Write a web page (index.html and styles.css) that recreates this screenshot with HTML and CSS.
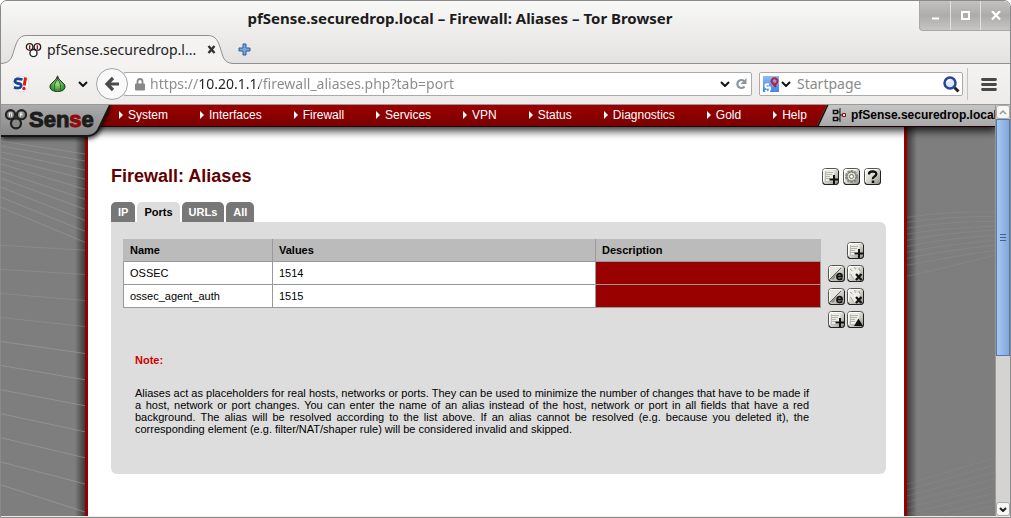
FILE: index.html
```html
<!DOCTYPE html>
<html lang="en">
<head>
<meta charset="utf-8">
<meta name="viewport" content="width=device-width, initial-scale=1">
<title>pfSense.securedrop.local – Firewall: Aliases</title>
<link rel="stylesheet" href="styles.css">
</head>
<body>
<svg class="defs" aria-hidden="true">
  <defs>
    <linearGradient id="btn" x1="0" y1="0" x2="1" y2="1"><stop offset="0" stop-color="#fff"/><stop offset=".5" stop-color="#d8d8d0"/><stop offset="1" stop-color="#8c8c84"/></linearGradient>
    <linearGradient id="metal" x1="0" y1="0" x2="0" y2="1"><stop offset="0" stop-color="#ababab"/><stop offset="1" stop-color="#858585"/></linearGradient>
    <linearGradient id="sp" x1="0" y1="0" x2="0" y2="1"><stop offset="0" stop-color="#8bbcf5"/><stop offset="1" stop-color="#3d86e8"/></linearGradient>
    <radialGradient id="onion"><stop offset="0" stop-color="#a5e07c"/><stop offset="1" stop-color="#2f8a34"/></radialGradient>
    <symbol id="base" viewBox="0 0 17 17"><rect x=".5" y=".5" width="16" height="16" rx="3" fill="url(#btn)" stroke="#55554f"/><path d="M1 14.500q0 2 2 2h11q2.500 0 2.500-2.500V3" fill="none" stroke="#222"/><path d="M1.500 13V3q0-1.500 1.500-1.500h10" fill="none" stroke="#fff"/></symbol>
    <symbol id="page" viewBox="0 0 17 17"><path d="M4 3h8v10H4z" fill="#eeeee6"/><path d="M4 4.500h7M4 6.500h6M4 8.500h4M4 10.500h4" stroke="#b4b4ac"/><path d="M3.500 3v10.500h5" fill="none" stroke="#bbb"/></symbol>
    <symbol id="add" viewBox="0 0 17 17"><use href="#base"/><use href="#page"/><path d="M12 7v9M7.500 11.500h9" stroke="#111" stroke-width="2"/></symbol>
    <symbol id="up" viewBox="0 0 17 17"><use href="#base"/><use href="#page"/><path d="M11.500 7.500 16 15H7z" fill="#111"/></symbol>
    <symbol id="edit" viewBox="0 0 17 17"><use href="#base"/><path d="M2 13 13 2H2z" fill="#e6e6de"/><path d="M2 14.500 14 3l-5 5-3 6.500z" fill="#8f8f87"/><path d="M2 14 13 3" stroke="#66665f"/><path d="M9 11.500h5q0-2.800-2.400-2.800T9 11.600t2.600 2.800q1.700 0 2.500-1.200" fill="none" stroke="#111" stroke-width="1.800"/></symbol>
    <symbol id="del" viewBox="0 0 17 17"><use href="#base"/><path d="m3 6 4-3 6 3-3 7-4 1z" fill="#efefe8"/><path d="m3 4 2.500 2M7.500 2l1 2.500M3.500 9l3 4.500M12 3l1 3" stroke="#a0a098"/><path d="m9 9 5.500 6m0-6L9 15" stroke="#111" stroke-width="2.200"/></symbol>
    <symbol id="gear" viewBox="0 0 17 17"><use href="#base"/><circle cx="8.500" cy="8.500" r="5.500" fill="#bcbcb4" stroke="#8a8a82" stroke-width="2" stroke-dasharray="2.500 1"/><circle cx="8.500" cy="8.500" r="4.500" fill="#ddddd5" stroke="#77776f"/><circle cx="8.500" cy="8.500" r="2" fill="#f8f8f0" stroke="#77776f"/></symbol>
    <symbol id="help" viewBox="0 0 17 17"><use href="#base"/><path d="M5 6.500V6q0-2.500 3.700-2.500T12.300 6q0 1.500-1.800 2.500T9 11" fill="none" stroke="#111" stroke-width="2.300"/><path d="M7.800 12.500h2.500v2.500H7.800z" fill="#111"/></symbol>
    <symbol id="rings" viewBox="0 0 22 20"><circle cx="6" cy="6" r="4.200"/><circle cx="16" cy="6" r="4.200"/><circle cx="11" cy="14" r="4.600"/></symbol>
    <symbol id="chev" viewBox="0 0 10 6"><path d="m1 1 4 4 4-4" fill="none" stroke="#111" stroke-width="2"/></symbol>
  </defs>
</svg>

<div class="window">
  <header class="chrome">
    <div class="titlebar">
      <span class="window-title">pfSense.securedrop.local – Firewall: Aliases – Tor Browser</span>
      <div class="controls">
        <button type="button" aria-label="Minimize"><svg width="9" height="9"><path d="M1 7.500h7" stroke="#fff" stroke-width="2"/></svg></button>
        <button type="button" aria-label="Maximize"><svg width="9" height="9"><path d="M1 1h7v7H1z" fill="none" stroke="#fff" stroke-width="2"/></svg></button>
        <button type="button" aria-label="Close"><svg width="10" height="9"><path d="m1 0 8 8.500M9 0 1 8.500" stroke="#fff" stroke-width="2.200"/></svg></button>
      </div>
    </div>
    <div class="tabstrip">
      <div class="browser-tab">
        <svg class="tab-shape" width="232" height="29" viewBox="0 0 232 29" aria-hidden="true"><path d="M0 29V28.500C11 28 11 21 14 12 17 3 20 .5 26 .5H206C213 .5 216 3 219 12 222 21 222 28 232 28.500V29z" fill="#f4f3f2"/><path d="M0 28.500C11 28 11 21 14 12 17 3 20 .5 26 .5H206C213 .5 216 3 219 12 222 21 222 28 232 28.500" fill="none" stroke="#8f8f8f"/></svg>
        <svg class="favicon" width="17" height="16" viewBox="0 0 22 20" fill="#fff" stroke="#222" stroke-width="1.800" aria-hidden="true"><use href="#rings"/><path d="M6 4v5M16 4v5" stroke="#b00"/></svg>
        <span class="tab-title">pfSense.securedrop.l...</span>
        <button type="button" class="tab-close" aria-label="Close tab"><svg width="9" height="9"><path d="m1.500 1 6 7m0-7-6 7" stroke="#333" stroke-width="2.400"/></svg></button>
      </div>
      <button type="button" class="new-tab" aria-label="New tab"><svg width="13" height="13"><path d="M5 1h3v4h4v3H8v4H5V8H1V5h4z" fill="#7ba6d9" stroke="#2d5c9e"/></svg></button>
    </div>
    <div class="toolbar">
      <button type="button" class="script-btn" aria-label="NoScript"><svg width="18" height="18" viewBox="0 0 18 18"><circle cx="9" cy="9" r="8" fill="#fff" stroke="#ddd"/><path d="M10.500 4.500Q3.500 2.500 3 6q0 2 3.500 2.500T9 11.500q-1 2.500-7 .8" fill="none" stroke="#16459b" stroke-width="2.800"/><path d="m13.500 2.500-1.200 8" stroke="#e01818" stroke-width="3"/><circle cx="12" cy="13.500" r="1.700" fill="#e01818"/></svg></button>
      <button type="button" class="onion-btn" aria-label="Tor"><svg width="17" height="18" viewBox="0 0 17 18"><path d="M8.500 1Q9 4 13 7t3 5.500q-1 4-7.500 4T1 12.500Q0 10 4 7t4.500-6z" fill="url(#onion)" stroke="#1c3d20"/><path d="M8.500 4Q4 9 6 16M8.500 4q4.500 5 2.500 12" fill="none" stroke="#2b6b2e"/><path d="m7 4 1.500-4L10 4z" fill="#553d4a"/></svg><svg width="10" height="6"><use href="#chev"/></svg></button>
      <button type="button" class="back" aria-label="Back"><svg width="16" height="16"><path d="M15 8H4M9 2 3 8l6 6" fill="none" stroke="#4a4a4a" stroke-width="3.200"/></svg></button>
      <div class="field url-field">
        <svg width="10" height="13" viewBox="0 0 10 13" aria-hidden="true"><path d="M2.500 6V3.500q0-2.500 2.500-2.500t2.500 2.500V6" fill="none" stroke="#888" stroke-width="1.800"/><rect y="5.500" width="10" height="7" rx="1" fill="#888"/></svg>
        <input class="url" type="text" aria-label="Address" value="https://10.20.1.1/firewall_aliases.php?tab=port">
        <svg width="10" height="6"><use href="#chev"/></svg>
        <button type="button" class="reload" aria-label="Reload"><svg width="12" height="12"><path d="M9.500 8.500a4 4 0 1 1-.500-5.500" fill="none" stroke="#8b959f" stroke-width="2.200"/><path d="M11.500 0v6h-6z" fill="#8b959f"/></svg></button>
      </div>
      <div class="field search-field">
        <svg width="16" height="16" viewBox="0 0 16 16" aria-hidden="true"><rect width="16" height="16" fill="url(#sp)"/><path d="M6 8.500Q2 7.500 2.500 10t3 1.500 1 3-4-.5" fill="none" stroke="#fff" stroke-width="2"/><path d="m8 5 5 6M8.500 5q1-3.500 4-2.500t1.500 4-3.500 1" fill="none" stroke="#c21d36" stroke-width="2"/></svg>
        <svg width="10" height="6"><use href="#chev"/></svg>
        <input class="search" type="text" aria-label="Search" placeholder="Startpage">
        <svg width="17" height="17" viewBox="0 0 17 17" aria-hidden="true"><path d="m11.500 11.500 4 4" stroke="#222" stroke-width="3"/><circle cx="7" cy="7" r="5.500" fill="#dce8fa" stroke="#28449a" stroke-width="2.500"/><path d="M4.500 6q.5-2 3-2" fill="none" stroke="#fff" stroke-width="1.500"/></svg>
      </div>
      <button type="button" class="menu-btn" aria-label="Menu"><svg width="16" height="13"><path d="M1.500 1.500h13M1.500 6.500h13M1.500 11.500h13" stroke="#484848" stroke-width="2.800" stroke-linecap="round"/></svg></button>
    </div>
  </header>

  <div class="viewport">
    <div class="site">
      <div class="masthead">
        <a class="logo" href="#" aria-label="pfSense">
          <svg class="logo-plate" width="114" height="40" aria-hidden="true"><path d="M0 0H109L97 25Q93 32 86 32H0z" fill="url(#metal)"/><path d="M109 0 97 25Q93 31 86 31H0" fill="none" stroke="#151515" stroke-width="2"/></svg>
          <svg class="logo-rings" width="24" height="22" viewBox="0 0 22 20" fill="#888" stroke="#222" stroke-width="2" aria-hidden="true"><use href="#rings"/><path d="M5 8V4.500h2V8M15 8V4.500h2M14.500 6h2.500" fill="none" stroke-width="1" stroke="#eee"/></svg>
          <span class="wordmark">Sen<span>s</span>e</span>
        </a>
        <nav class="menu">
          <a href="#">System</a><a href="#">Interfaces</a><a href="#">Firewall</a><a href="#">Services</a><a href="#">VPN</a><a href="#">Status</a><a href="#">Diagnostics</a><a href="#">Gold</a><a href="#">Help</a>
        </nav>
        <div class="host">
          <svg width="14" height="15" aria-hidden="true"><path d="M1.500 2.500h4v3h-4zM1.500 9.500h4v3h-4z" fill="#ddd" stroke="#111" stroke-width="1.600"/><path d="M5.500 4H8m-2.500 7H8M8 0v14M8 7h2" fill="none" stroke="#111"/><path d="M10.500 5.500h3v3h-3z" fill="#eee" stroke="#8a0a0a"/></svg>
          <span>pfSense.securedrop.local</span>
        </div>
      </div>
      <div class="body">
        <div class="side side-left">
          <svg viewBox="0 0 86 388" preserveAspectRatio="none" fill="none" stroke="#a5a5a5" aria-hidden="true">
            <path opacity=".4" d="M0 14 86 27M0 19 86 34M0 25 86 43M0 31 86 52M0 37 86 62M0 44 86 72M0 51 86 82M0 60 86 93M0 70 86 104M0 80 86 115"/>
            <path opacity=".3" d="M0 118 86 123M0 142 86 147M0 166 86 173M0 190 86 199"/>
            <path opacity=".5" d="M0 214 86 226M0 238 86 252M0 262 86 278M0 286 86 304M0 310 86 330M0 334 86 356M0 357 86 384"/>
          </svg>
        </div>
        <main class="content">
          <div class="heading-row">
            <h1>Firewall: Aliases</h1>
            <div class="actions">
              <button type="button" aria-label="Add"><svg><use href="#add"/></svg></button>
              <button type="button" aria-label="Settings"><svg><use href="#gear"/></svg></button>
              <button type="button" aria-label="Help"><svg><use href="#help"/></svg></button>
            </div>
          </div>
          <nav class="tabs">
            <a href="#">IP</a><a href="#" class="active" aria-current="page">Ports</a><a href="#">URLs</a><a href="#">All</a>
          </nav>
          <section class="panel">
            <table>
              <colgroup><col class="c-name"><col class="c-values"><col class="c-desc"><col class="c-tools"></colgroup>
              <thead>
                <tr><th scope="col">Name</th><th scope="col">Values</th><th scope="col">Description</th><td class="tools"><div><button type="button" aria-label="Add alias"><svg><use href="#add"/></svg></button></div></td></tr>
              </thead>
              <tbody>
                <tr><td>OSSEC</td><td>1514</td><td class="desc"></td><td class="tools"><div><button type="button" aria-label="Edit OSSEC"><svg><use href="#edit"/></svg></button><button type="button" aria-label="Delete OSSEC"><svg><use href="#del"/></svg></button></div></td></tr>
                <tr><td>ossec_agent_auth</td><td>1515</td><td class="desc"></td><td class="tools"><div><button type="button" aria-label="Edit ossec_agent_auth"><svg><use href="#edit"/></svg></button><button type="button" aria-label="Delete ossec_agent_auth"><svg><use href="#del"/></svg></button></div></td></tr>
              </tbody>
              <tfoot>
                <tr><td class="tools" colspan="4"><div><button type="button" aria-label="Add new alias"><svg><use href="#add"/></svg></button><button type="button" aria-label="Import aliases"><svg><use href="#up"/></svg></button></div></td></tr>
              </tfoot>
            </table>
            <div class="note">
              <h2>Note:</h2>
              <p>Aliases act as placeholders for real hosts, networks or ports. They can be used to minimize the number of changes that have to be made if a host, network or port changes. You can enter the name of an alias instead of the host, network or port in all fields that have a red background. The alias will be resolved according to the list above. If an alias cannot be resolved (e.g. because you deleted it), the corresponding element (e.g. filter/NAT/shaper rule) will be considered invalid and skipped.</p>
            </div>
          </section>
        </main>
        <div class="side side-right">
          <svg viewBox="0 0 88 388" preserveAspectRatio="none" fill="none" stroke="#999" aria-hidden="true">
            <path opacity=".3" d="M0 90Q40 84 88 85M0 95Q40 89 88 89M0 101Q40 94 88 94M0 107Q40 100 88 99M0 113Q40 105 88 103M0 119Q40 111 88 108M0 125Q40 117 88 113M0 131Q40 123 88 118M0 138Q40 130 88 123M0 149Q40 140 88 128"/>
            <path opacity=".2" d="M0 356 88 330M0 362 88 337M0 368 88 344M0 374 88 351M0 380 88 358M0 386 88 365M20 388 88 372M40 388 88 378"/>
          </svg>
        </div>
      </div>
    </div>
    <div class="scrollbar" aria-hidden="true">
      <div class="sb-btn"><svg width="8" height="5"><path d="m1 4 3-3 3 3" fill="none" stroke="#999" stroke-width="1.500"/></svg></div>
      <div class="sb-thumb"><svg width="6" height="8"><path d="M0 .5h6M0 3.500h6M0 6.500h6" stroke="#3d6396"/></svg></div>
      <div class="sb-track"></div>
      <div class="sb-btn"><svg width="8" height="5"><path d="m1 1 3 3 3-3" fill="none" stroke="#222" stroke-width="2"/></svg></div>
    </div>
  </div>
</div>
</body>
</html>
```

FILE: styles.css
```css
* { box-sizing: border-box; }

body {
  margin: 0;
  background: #fff;
  font: 11px/12px "Liberation Sans", Arial, sans-serif;
  color: #000;
}

button {
  display: flex;
  align-items: center;
  justify-content: center;
  padding: 0;
  border: 0;
  background: none;
}

svg { display: block; flex: none; }

.defs { position: absolute; width: 0; height: 0; }

.window {
  display: flex;
  flex-direction: column;
  min-height: 100vh;
  border: 1px solid #8a8a8a;
  border-radius: 7px 7px 0 0;
  background: #edebea;
  overflow: hidden;
}

/* Browser chrome */
.chrome {
  flex: none;
  font: 14px/20px "Noto Sans", "Open Sans", sans-serif;
  background: linear-gradient(#f8f8f7, #e3e2e1 62px, #f4f3f2 63px, #edebea);
  border-bottom: 1px solid #999;
}

.titlebar {
  display: flex;
  align-items: flex-start;
  height: 34px;
}

.window-title {
  flex: 1;
  padding-top: 7px;
  text-align: center;
  font-size: 15px;
  font-weight: 700;
  color: #1c1c1c;
  white-space: nowrap;
}

.controls {
  display: flex;
  background: linear-gradient(#c2c1c0, #adacab 50%, #c6c5c4);
  border: 1px solid #a8a8a8;
  border-width: 0 0 1px 1px;
  border-radius: 0 0 0 4px;
}

.controls button { width: 30px; height: 29px; }
.controls button + button { border-left: 1px solid #e2e2e2; }

.tabstrip {
  display: flex;
  height: 29px;
  border-bottom: 1px solid #8f8f8f;
}

.browser-tab {
  position: relative;
  display: flex;
  align-items: center;
  width: 232px;
  height: 29px;
  padding: 0 17px 0 24px;
}

.tab-shape { position: absolute; left: 0; top: 0; }
.favicon, .tab-title, .tab-close { position: relative; }
.tab-title { flex: 1; padding-left: 5px; color: #222; white-space: nowrap; }
.new-tab { width: 22px; height: 29px; }

.toolbar {
  display: flex;
  align-items: center;
  height: 40px;
  padding-right: 13px;
}

.script-btn { margin-left: 11px; }
.onion-btn { gap: 12px; margin-left: 19px; }

.back {
  position: relative;
  width: 32px;
  height: 32px;
  margin-left: 8px;
  border: 1px solid #a0a5aa;
  border-radius: 50%;
  background: #f9f9f9;
}

.field {
  display: flex;
  align-items: center;
  height: 24px;
  border: 1px solid #aaa;
  border-radius: 2px;
  background: #fff;
}

.url-field { flex: 1; gap: 5px; margin-left: -5px; padding: 0 4px 0 11px; }
.search-field { width: 204px; gap: 2px; margin-left: 7px; padding: 0 2px 0 3px; }

.field input {
  flex: 1;
  min-width: 0;
  padding: 0;
  border: 0;
  outline: 0;
  background: none;
  font: inherit;
}

.field .url {
  color: transparent;
  background: linear-gradient(90deg, #8a8a8a 49px, #222 49px, #222 109px, #8a8a8a 109px);
  background-clip: text;
  -webkit-background-clip: text;
}

.field .search { padding-left: 4px; }
.search::placeholder { color: #8a8a8a; }

.menu-btn {
  height: 32px;
  margin-left: 4px;
  padding-left: 13px;
  border-left: 1px solid #c0c4c8;
}

/* Page area */
.viewport { flex: 1; display: flex; margin-bottom: 1px; }

.site {
  flex: 1;
  display: flex;
  flex-direction: column;
  min-width: 0;
  overflow: hidden;
  background: #7e7e7e;
}

.masthead {
  position: relative;
  z-index: 1;
  display: flex;
  height: 22px;
  background: linear-gradient(#9c0000, #7a0000);
  border-bottom: 1px solid #1c0000;
  box-shadow: 0 2px 8px 2px rgba(0, 0, 0, .8);
}

.logo { position: absolute; left: 0; top: 0; color: #1c1c1c; text-decoration: none; }
.logo-plate { filter: drop-shadow(1px 2px 2px rgba(0, 0, 0, .7)); }
.logo-rings { position: absolute; left: 3px; top: 3px; }

.wordmark {
  position: absolute;
  left: 28px;
  top: 2px;
  font: 700 22px/26px "Liberation Sans", Arial, sans-serif;
  -webkit-text-stroke: 1px currentColor;
}

.wordmark span { color: #8e0b0b; }

.menu {
  flex: none;
  display: flex;
  gap: 32px;
  padding: 0 10px 1px 118px;
  font-size: 12px;
  line-height: 20px;
}

.menu a {
  display: flex;
  align-items: center;
  gap: 5px;
  color: #fff;
  text-decoration: none;
}

.menu a::before {
  content: "";
  border: solid transparent;
  border-width: 4px 0 4px 4px;
  border-left-color: #fff;
}

.host {
  flex: 1;
  display: flex;
  align-items: center;
  gap: 5px;
  min-width: 0;
  padding-left: 15px;
  overflow: hidden;
  background: linear-gradient(115deg, #111 10px, transparent 11px), linear-gradient(#c6c6c6, #a8a8a8);
  clip-path: polygon(10px 0, 100% 0, 100% 100%, 0 100%);
  font-size: 12px;
  font-weight: 700;
  line-height: 20px;
  white-space: nowrap;
}

.host span { align-self: flex-start; }

.body { flex: 1; display: flex; justify-content: center; }

.side { position: relative; flex: 1 0 0; overflow: hidden; }
.side svg { position: absolute; width: 100%; height: 100%; }
.side-left { background: linear-gradient(270deg, #3c3c3c, #7e7e7e 10px); }
.side-right { flex-basis: 4px; background: linear-gradient(90deg, #3c3c3c, #7e7e7e 10px); }

.content {
  flex: 0 1 822px;
  padding: 38px 18px 41px 23px;
  border: solid #960000;
  border-width: 0 3px;
  background: #fff;
}

.heading-row {
  display: flex;
  justify-content: space-between;
  align-items: center;
  padding-right: 5px;
}

h1 { margin: 0; font-size: 18px; line-height: 22px; color: #600000; }

.actions { display: flex; gap: 4px; }
.actions svg, .tools svg { width: 17px; height: 17px; }

.tabs { display: flex; gap: 2px; margin-top: 15px; }

.tabs a {
  padding: 0 7px;
  border-radius: 5px 5px 0 0;
  background: #777;
  color: #fff;
  font-weight: 700;
  line-height: 20px;
  text-decoration: none;
}

.tabs .active { background: #ddd; color: #000; }

.panel {
  padding: 17px 22px 39px 12px;
  border-radius: 0 6px 6px 6px;
  background: #ddd;
}

table { width: 100%; border-spacing: 0; table-layout: fixed; }
.c-name { width: 150px; }
.c-desc { width: 225px; }
.c-tools { width: 43px; }

th, td {
  height: 23px;
  padding: 0 6px;
  border: solid #999;
  border-width: 0 1px 1px 0;
  text-align: left;
}

th { background: #bbb; }
td { background: #fff; }
tr > :first-child { border-left-width: 1px; }
thead tr > :first-child { border-left-color: #bbb; }
thead th:nth-child(3) { border-right-color: #bbb; }
td.desc { background: #900; }
td.tools { padding: 0; border: 0; background: none; }
.tools div { display: flex; justify-content: flex-end; gap: 2px; }

.note { padding: 23px 55px 0 12px; }
.note h2 { margin: 0 0 21px; font-size: 11px; line-height: 12px; color: #c00; }
.note p { margin: 0; text-align: justify; }

/* Scrollbar */
.scrollbar {
  display: flex;
  flex-direction: column;
  width: 15px;
  border-left: 1px solid #999;
  background: #d5d3d1;
}

.sb-btn {
  display: flex;
  align-items: center;
  justify-content: center;
  height: 14px;
  border: 1px solid #aaa;
  border-radius: 3px;
  background: #f6f6f5;
}

.sb-thumb {
  flex: 236 0 0;
  display: flex;
  align-items: center;
  justify-content: center;
  border: 1px solid #4f79b0;
  background: linear-gradient(90deg, #a9c7ec, #7fa8dc);
}

.sb-track { flex: 146 0 0; }
```
